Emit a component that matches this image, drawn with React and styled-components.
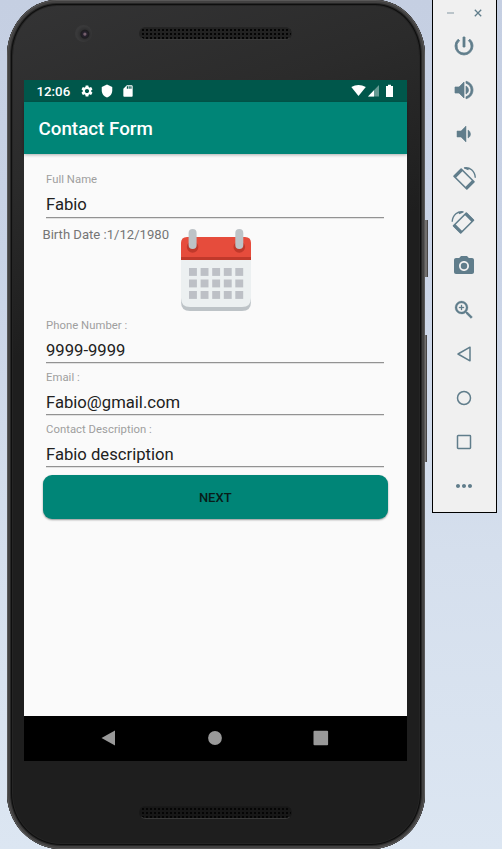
import React from "react";
import styled, { createGlobalStyle } from "styled-components";
import {
  MdPowerSettingsNew,
  MdVolumeUp,
  MdVolumeDown,
  MdCameraAlt,
  MdZoomIn,
  MdMoreHoriz,
  MdSettings,
  MdShield,
  MdSdCard,
} from "react-icons/md";

const GlobalStyle = createGlobalStyle`
  * { box-sizing: border-box; }
  body { margin: 0; font-family: Roboto, "Liberation Sans", sans-serif; overflow: hidden; }
`;

const Desktop = styled.main`
  display: flex;
  align-items: flex-start;
  width: 502px;
  height: 849px;
  overflow: hidden;
  padding-left: 7px;
  background: linear-gradient(180deg, #c5cfe2 0%, #c9d3e6 30%, #d5dfed 65%, #dce6f2 100%);
`;

const Phone = styled.section`
  position: relative;
  flex: none;
  display: flex;
  flex-direction: column;
  width: 418px;
  height: 849px;
  padding: 0 18px 0 17px;
  border-radius: 50px 50px 54px 54px / 56px 56px 56px 56px;
  background: linear-gradient(160deg, #343435 0%, #2b2b2b 18%, #1e1e1e 36%, #1e1e1e 100%);
  box-shadow: inset 0 0 0 1px #595858, inset 0 0 0 3px #424141, inset 0 0 0 4px #272727,
    inset 0 0 0 5px #0e0e0e, inset 0 0 0 6px #252525;
`;

const SideButton = styled.span`
  position: absolute;
  left: 418px;
  top: ${(p) => p.$top}px;
  width: ${(p) => p.$width}px;
  height: ${(p) => p.$height}px;
  background: #716f6e;
  border-right: 1px solid #484646;
`;

const Bezel = styled.div`
  position: relative;
  flex: none;
  height: ${(p) => p.$height}px;
  padding-top: ${(p) => p.$inset}px;
  display: flex;
  justify-content: center;
`;

const Speaker = styled.div`
  width: 153px;
  height: 13px;
  border-radius: 7px;
  border: 1px solid ${(p) => (p.$dim ? "#191919" : "#242424")};
  border-bottom-color: #393939;
  background: radial-gradient(circle, #050505 0.8px, transparent 1.3px) 1px 0 / 4px 4px,
    ${(p) => (p.$dim ? "#171717" : "#222")};
`;

const Camera = styled.span`
  position: absolute;
  left: 51px;
  top: 25px;
  width: 17px;
  height: 17px;
  border-radius: 50%;
  background: radial-gradient(circle at 58% 54%, #75606c 0 1px, #292330 2px, #1d1d1f 4px, #303031 5px, #39393a 8px);
`;

const Screen = styled.div`
  flex: none;
  height: 681px;
  display: flex;
  flex-direction: column;
  background: #fafafa;
`;

const StatusBar = styled.div`
  height: 22px;
  display: flex;
  align-items: center;
  padding: 0 12px 0 12.5px;
  color: #fff;
  background: #00574b;
`;

const Clock = styled.span`
  width: 43px;
  font-size: 13.3px;
  font-weight: 500;
`;

const StatusIcons = styled.div`
  display: flex;
  align-items: center;
  gap: 6.5px;
`;

const SignalIcons = styled.div`
  margin-left: auto;
  display: flex;
  align-items: center;
  svg { display: block; }
`;

const AppBar = styled.header`
  position: relative;
  height: 52px;
  padding: 2px 15px 0 14.5px;
  display: flex;
  align-items: center;
  background: #008577;
  box-shadow: 0 1px 3px rgba(0, 0, 0, 0.3);
`;

const Title = styled.h1`
  margin: 0;
  color: #fff;
  font-size: 18.8px;
  font-weight: 500;
`;

const Form = styled.form`
  flex: 1;
  padding: 12px 19px 0 18.5px;
`;

const Field = styled.label`
  display: flex;
  flex-direction: column;
  height: 52px;
  margin: 0 4px 0 3.5px;
  padding-top: ${(p) => p.$top}px;
  border-bottom: 1px solid #929292;
  box-shadow: 0 1px 0 #e1e1e1;
`;

const FieldLabel = styled.span`
  height: 16px;
  line-height: 16px;
  font-size: 11.3px;
  letter-spacing: 0.04px;
  color: #9e9e9e;
`;

const FieldInput = styled.input`
  width: 100%;
  height: 24px;
  margin-top: 4px;
  padding: 0;
  border: 0;
  outline: 0;
  background: transparent;
  color: #212121;
  font: 400 16.65px Roboto, sans-serif;
`;

const DateRow = styled.div`
  display: flex;
  height: 93px;
`;

const DateText = styled.span`
  width: 138.5px;
  padding-top: 9px;
  line-height: 16px;
  font-size: 13.1px;
  color: #757575;
  white-space: nowrap;
`;

const CalendarIcon = styled.svg`
  width: 70px;
  height: 82px;
  margin-top: 11px;
`;

const NextButton = styled.button`
  display: block;
  width: 100%;
  height: 44px;
  margin-top: 8px;
  border: 0;
  border-radius: 9px;
  background: #008577;
  box-shadow: 0 1px 2px rgba(0, 0, 0, 0.4);
  color: #081d1a;
  font: 500 13px Roboto, sans-serif;
`;

const NavBar = styled.nav`
  height: 45px;
  display: flex;
  justify-content: center;
  align-items: center;
  padding: 0 2px 1px 0;
  background: #000;
  svg { width: 106px; height: 20px; }
`;

const Toolbar = styled.aside`
  flex: none;
  width: 65px;
  height: 513px;
  margin-left: 7px;
  border: 1px solid #000;
  border-top: 0;
  background: #f0f0f0;
  color: #607d8b;
`;

const WindowControls = styled.div`
  display: flex;
  height: 24px;
  padding: 8px 0 0 13px;
  gap: 17px;
  svg { width: 10px; height: 10px; }
`;

const ToolButton = styled.button`
  display: flex;
  align-items: center;
  justify-content: center;
  width: 62px;
  height: 44px;
  padding: 0;
  border: 0;
  background: transparent;
  color: inherit;
  path[fill="none"] { stroke: none; }
`;

function Rotate({ flipped }) {
  return (
    <svg width="26" height="26" viewBox="0 0 26 26" fill="none" stroke="currentColor">
      <g transform={flipped ? "translate(25.5 0) scale(-1 1)" : undefined}>
        <path d="M3 11.2 10.2 4 23 16.8 15.8 24Z" strokeWidth="1.6" strokeLinejoin="round" />
        <path d="M3.7 11.9 10.9 4.7M15.1 23.3 22.3 16.1" strokeWidth="3" />
        <path d="M13 3C18.5 1.7 24 5.8 24.3 12.7M13.4 2.8 17.5 4.6" strokeWidth="1.4" />
      </g>
    </svg>
  );
}

const outline = { width: 16, height: 16, viewBox: "0 0 16 16", fill: "none", stroke: "currentColor", strokeWidth: 1.5 };

const tools = [
  ["Power", <MdPowerSettingsNew size={24} strokeWidth={0.8} />],
  ["Volume up", <MdVolumeUp size={24} strokeWidth={0.7} />],
  ["Volume down", <MdVolumeDown size={24} strokeWidth={0.5} />],
  ["Rotate left", <Rotate />],
  ["Rotate right", <Rotate flipped />],
  ["Screenshot", <MdCameraAlt size={24} />],
  ["Zoom", <MdZoomIn size={24} strokeWidth={0.3} />],
  ["Back", <svg {...outline}><path d="M14 1.2V14.8L2 8Z" strokeLinejoin="round" /></svg>],
  ["Home", <svg {...outline}><circle cx="8" cy="8" r="6.5" /></svg>],
  ["Overview", <svg {...outline}><rect x="1.5" y="1.5" width="13" height="13" rx="0.7" /></svg>],
  ["More", <MdMoreHoriz size={24} />],
];

const columns = [8, 19.6, 31.2, 42.8, 54.3];
const rows = [39, 50.5, 62];

function Calendar() {
  return (
    <CalendarIcon viewBox="0 0 70 82">
      <path d="M0 30H70V73Q70 82 61 82H9Q0 82 0 73Z" fill="#bdc3c7" />
      <path d="M0 30H70V69Q70 78 61 78H9Q0 78 0 69Z" fill="#ecf0f1" />
      <path d="M0 31V14Q0 8 6 8H64Q70 8 70 14V31Z" fill="#e64c3c" />
      <rect y="28" width="70" height="3" fill="#c0392b" />
      {[11.6, 58.3].map((x) => (
        <g key={x}>
          <circle cx={x} cy="18" r="5.8" fill="#c0392b" />
          <rect x={x - 4} y="0" width="8" height="20" rx="4" fill="#bdc3c7" />
        </g>
      ))}
      {rows.map((y) => columns.map((x) => (
        <rect key={`${x}-${y}`} x={x} y={y} width="7.9" height="7.9" fill="#bdc0c6" />
      )))}
    </CalendarIcon>
  );
}

function TextField({ label, value, top = 7 }) {
  return (
    <Field $top={top}>
      <FieldLabel>{label}</FieldLabel>
      <FieldInput defaultValue={value} spellCheck={false} />
    </Field>
  );
}

export default function App() {
  return (
    <>
      <GlobalStyle />
      <Desktop>
        <Phone>
          <SideButton $top={220} $width={3} $height={57} />
          <SideButton $top={335} $width={2} $height={127} />
          <Bezel $height={80} $inset={27}>
            <Camera />
            <Speaker />
          </Bezel>
          <Screen>
            <StatusBar>
              <Clock>12:06</Clock>
              <StatusIcons>
                <MdSettings size={14} />
                <MdShield size={14} />
                <MdSdCard size={14} />
              </StatusIcons>
              <SignalIcons>
                <svg width="44" height="14" viewBox="0 0 44 14" fill="#fff">
                  <path d="M0.3 3Q7.5-1.2 14.8 3L7.5 12Z" />
                  <path d="M28 1V12.5H17Z" opacity=".4" />
                  <path d="M23 6.3V12.5H17Z" />
                  <path d="M35 2H37V.8H40V2H42V13H35Z" />
                </svg>
              </SignalIcons>
            </StatusBar>
            <AppBar>
              <Title>Contact Form</Title>
            </AppBar>
            <Form>
              <TextField label="Full Name" value="Fabio" top={6} />
              <DateRow>
                <DateText>Birth Date :1/12/1980</DateText>
                <Calendar />
              </DateRow>
              <TextField label="Phone Number :" value="9999-9999" />
              <TextField label="Email :" value="Fabio@gmail.com" />
              <TextField label="Contact Description :" value="Fabio description" />
              <NextButton type="button">NEXT</NextButton>
            </Form>
            <NavBar>
              <svg viewBox="0 0 106 20" fill="#999"><path d="M59 2.5V17.5L45.5 10Z" /></svg>
              <svg viewBox="0 0 106 20" fill="#999"><circle cx="53" cy="10" r="6.9" /></svg>
              <svg viewBox="0 0 106 20" fill="#999"><rect x="45.5" y="2.7" width="14.6" height="14.6" rx="1" /></svg>
            </NavBar>
          </Screen>
          <Bezel $height={88} $inset={45}>
            <Speaker $dim />
          </Bezel>
        </Phone>
        <Toolbar>
          <WindowControls>
            <svg viewBox="0 0 10 10" stroke="currentColor"><path d="M1 5H8" opacity=".75" /></svg>
            <svg viewBox="0 0 10 10" stroke="currentColor" strokeWidth="1.3"><path d="M1.8 1.8 8.2 8.2M8.2 1.8 1.8 8.2" /></svg>
          </WindowControls>
          {tools.map(([name, icon]) => (
            <ToolButton key={name} type="button" aria-label={name}>{icon}</ToolButton>
          ))}
        </Toolbar>
      </Desktop>
    </>
  );
}
